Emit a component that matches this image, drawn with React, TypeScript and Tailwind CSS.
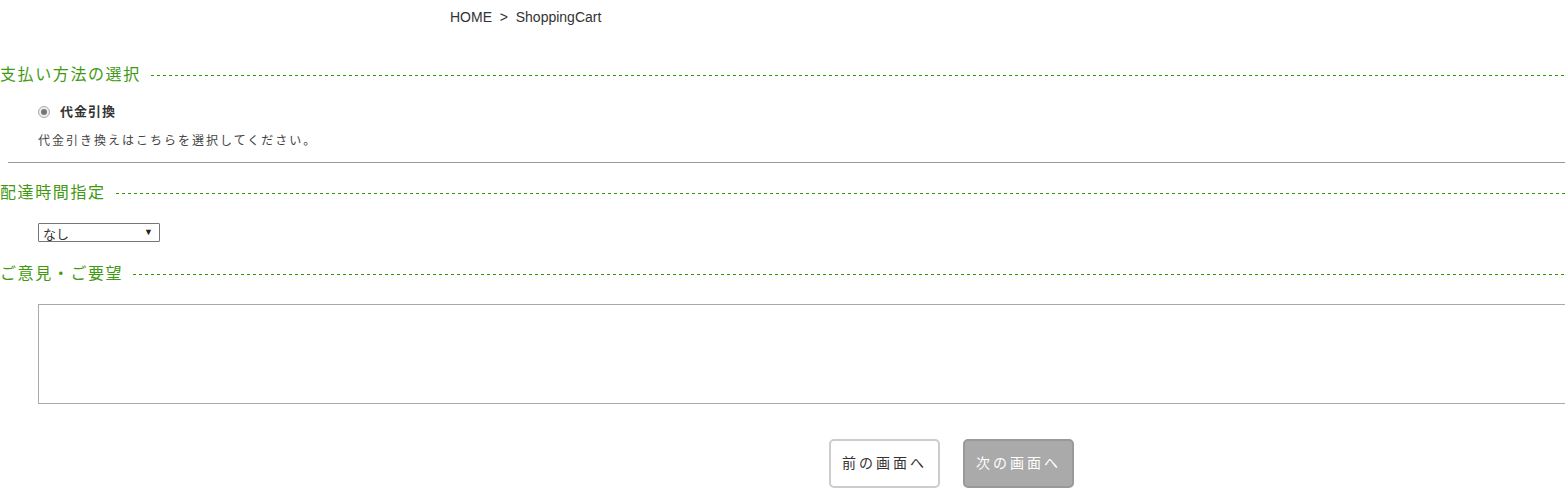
import React from "react";

const font = "font-['Liberation_Sans','Noto_Sans_CJK_JP',sans-serif]";

const SectionHeading = ({ title }: { title: string }) => (
  <div className="flex items-start gap-[10px] h-[22px]">
    <h2 className="text-[16px] leading-[22px] tracking-[1.6px] text-[#3f9a12] whitespace-nowrap">{title}</h2>
    <div className="flex-1 h-px mt-[11px] bg-[repeating-linear-gradient(90deg,#339900_0px,#339900_3px,transparent_3px,transparent_6px)]" />
  </div>
);

export default function App() {
  return (
    <div className={`${font} w-[1565px] h-[499px] bg-white text-[#333] overflow-hidden`}>
      <div className="pl-[450px] pt-[9px] text-[14px] leading-[16px] text-[#333]">
        HOME&nbsp;&nbsp;&gt;&nbsp;&nbsp;ShoppingCart
      </div>

      <section className="mt-[39px]">
        <SectionHeading title="支払い方法の選択" />
        <div className="pl-[38px] mt-[17px]">
          <label className="flex items-center gap-[10px] h-[18px]">
            <span className="w-[12px] h-[12px] rounded-full border border-[#aaa] bg-[#eee] flex items-center justify-center">
              <span className="w-[6px] h-[6px] rounded-full bg-[#777]" />
            </span>
            <span className="text-[13px] tracking-[1px] font-bold text-[#333]">代金引換</span>
          </label>
          <p className="text-[12px] leading-[16px] tracking-[2px] mt-[12px] text-[#444]">代金引き換えはこちらを選択してください。</p>
        </div>
        <div className="ml-[8px] mt-[13px] border-t border-[#999]" />
      </section>

      <section className="mt-[19px]">
        <SectionHeading title="配達時間指定" />
        <div className="pl-[38px] mt-[19px]">
          <div className="w-[122px] h-[19px] border border-[#767676] rounded-[1px] flex items-center justify-between pl-[4px] pr-[6px]">
            <span className="text-[13px] leading-[13px] mt-[3px] text-[#333]">なし</span>
            <span className="text-[9px] leading-[9px] text-[#222]">▼</span>
          </div>
        </div>
      </section>

      <section className="mt-[21px]">
        <SectionHeading title="ご意見・ご要望" />
        <div className="pl-[38px] mt-[19px]">
          <textarea className="block w-[1540px] h-[100px] border border-[#aaa] resize-none outline-none" />
        </div>
      </section>

      <div className="flex justify-center gap-[23px] pl-[338px] mt-[35px]">
        <button className="w-[111px] h-[49px] rounded-[5px] border-2 border-[#ccc] bg-white text-[14px] tracking-[3px] text-[#333]">
          前の画面へ
        </button>
        <button className="w-[111px] h-[49px] rounded-[5px] border-2 border-[#999] bg-[#aaa] text-[14px] tracking-[3px] text-white">
          次の画面へ
        </button>
      </div>
    </div>
  );
}
